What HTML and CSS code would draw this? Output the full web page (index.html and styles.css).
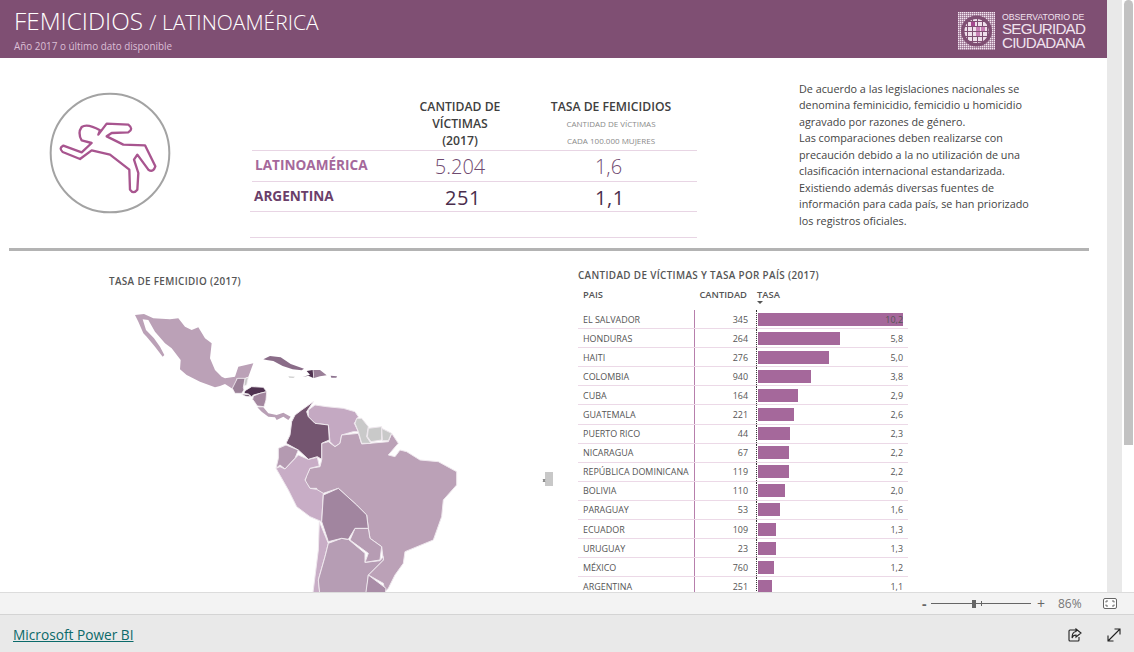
FILE: index.html
```html
<!DOCTYPE html>
<html lang="es">
<head>
<meta charset="utf-8">
<title>Femicidios / Latinoamérica</title>
<link rel="stylesheet" href="styles.css">
</head>
<body>
<div class="viewer">
  <main class="report">
    <header class="banner">
      <div class="titles">
        <h1 class="title">FEMICIDIOS <span class="title-sub">/ LATINOAMÉRICA</span></h1>
        <p class="subtitle">Año 2017 o último dato disponible</p>
      </div>
      <div class="logo">
        <svg class="logo-mark" width="37" height="38" viewBox="0 0 37 38">
          <defs>
            <pattern id="dots" width="2" height="2" patternUnits="userSpaceOnUse"><rect width="1.5" height="1.5" fill="#f3e6f1"/></pattern>
            <pattern id="cells" width="5" height="5" patternUnits="userSpaceOnUse"><rect width="4" height="4" fill="#efe0ec"/></pattern>
          </defs>
          <rect width="37" height="38" fill="url(#dots)"/>
          <circle cx="18.5" cy="19" r="15.500" fill="#7f4f73"/>
          <circle cx="18.5" cy="19" r="12" fill="url(#cells)"/>
          <rect x="13" y="10" width="4" height="4" fill="#a5498f"/>
          <rect x="18" y="15" width="4" height="4" fill="#c77fb4"/>
          <rect x="23" y="15" width="4" height="4" fill="#c77fb4"/>
          <rect x="18" y="20" width="4" height="4" fill="#c77fb4"/>
        </svg>
        <div class="logo-text">
          <span class="logo-small">OBSERVATORIO DE</span>
          <span class="logo-big">SEGURIDAD</span>
          <span class="logo-big">CIUDADANA</span>
        </div>
      </div>
    </header>

    <section class="summary">
      <div class="emblem">
        <svg width="122" height="122" viewBox="147 277 366 366">
          <circle cx="330" cy="460" r="178" fill="none" stroke="#a3a3a3" stroke-width="6"/>
          <path d="M190 438 L245 458 L275 430 L245 422 Q232 400 245 382 Q262 370 300 392 L295 405 L320 372 L385 375 Q402 388 385 398 L335 400 L320 410 L370 435 L435 437 L466 500 Q460 520 445 510 L412 465 L402 480 L415 520 L412 570 Q400 585 390 570 L388 510 L330 465 L275 452 L240 478 L188 457 Q175 445 190 438 Z" fill="none" stroke="#a8558f" stroke-width="7" stroke-linejoin="round"/>
        </svg>
      </div>
      <div class="kpi">
        <div class="kpi-head">
          <div></div>
          <div class="kpi-col">CANTIDAD DE<br>VÍCTIMAS<br>(2017)</div>
          <div class="kpi-col">TASA DE FEMICIDIOS
            <small class="kpi-note">CANTIDAD DE VÍCTIMAS</small>
            <small class="kpi-note">CADA 100.000 MUJERES</small>
          </div>
        </div>
        <div class="kpi-row kpi-region">
          <div class="kpi-label">LATINOAMÉRICA</div>
          <div class="kpi-value">5.204</div>
          <div class="kpi-value">1,6</div>
        </div>
        <div class="kpi-row kpi-country">
          <div class="kpi-label">ARGENTINA</div>
          <div class="kpi-value">251</div>
          <div class="kpi-value">1,1</div>
        </div>
        <div class="kpi-row kpi-empty"></div>
      </div>
      <p class="note">De acuerdo a las legislaciones nacionales se denomina feminicidio, femicidio u homicidio agravado por razones de género.<br>Las comparaciones deben realizarse con precaución debido a la no utilización de una clasificación internacional estandarizada. Existiendo además diversas fuentes de información para cada país, se han priorizado los registros oficiales.</p>
    </section>

    <hr class="rule">

    <section class="lower">
      <div class="map-panel">
        <h2 class="panel-title map-title">TASA DE FEMICIDIO (2017)</h2>
        <svg class="map" width="460" height="292" viewBox="100 300 460 292">
          <g transform="translate(130 310) scale(0.33333)">
            <path fill="#bba1b7" d="M15 15 L42 12 L70 25 L120 28 L145 25 L165 50 L185 60 L205 52 L225 85 L245 100 L240 145 L255 180 L275 200 L285 205 L315 200 L325 170 L370 160 L355 200 L345 205 L320 205 L315 235 L305 235 L285 222 L270 228 L255 232 L210 215 L170 195 L150 178 L152 150 L125 115 L105 100 L75 65 L55 30 L38 28 L48 60 L72 85 L90 110 L103 135 L98 140 L75 110 L50 80 L40 70 L25 35 Z"/>
          </g>
          <g transform="translate(120 300) scale(0.33333)" stroke="#f4eff3" stroke-width="2.500" stroke-linejoin="round">
            <path fill="#c9c9c9" d="M375 235 L385 232 L380 255 L372 258 Z"/>
            <path fill="#9a8097" d="M352 235 L375 235 L370 262 L372 270 L365 280 L345 280 L337 265 Z"/>
            <path fill="#4f3250" d="M375 272 L395 260 L430 262 L440 275 L420 280 L400 285 L395 290 L385 282 L372 280 Z"/>
            <path fill="#4f3250" d="M365 282 L385 284 L392 290 L375 288 Z"/>
            <path fill="#a3879f" d="M400 288 L420 280 L440 275 L438 300 L432 320 L412 318 L398 298 Z"/>
            <path fill="#b9a0b6" stroke="none" d="M412 322 L430 322 L445 340 L470 345 L490 338 L512 350 L505 360 L490 350 L470 360 L465 352 L445 350 L425 335 Z"/>
            <path fill="#8a6c88" stroke="none" d="M430 178 L450 168 L482 172 L512 192 L552 206 L545 211 L518 208 L488 198 L460 183 L440 180 Z"/>
            <path fill="#4f3250" stroke="none" d="M560 213 L578 210 L580 234 L565 227 L548 231 L570 224 Z"/>
            <path fill="#9a7f98" stroke="none" d="M580 210 L600 210 L620 226 L600 229 L582 234 Z"/>
            <path fill="#8e7490" stroke="none" d="M632 227 L651 229 L649 233 L634 233 Z"/>
            <path fill="#d0d0d0" stroke="none" d="M505 229 L525 230 L520 234 L508 233 Z"/>
          </g>
          <g transform="translate(260 400) scale(0.33333)" stroke="#efe8ee" stroke-width="3" stroke-linejoin="round">
            <path fill="#c4a9c2" d="M145 30 L165 15 L200 20 L250 25 L285 35 L295 50 L283 70 L295 95 L280 95 L245 105 L240 130 L225 140 L210 125 L205 75 L165 70 L145 50 Z"/>
            <path fill="#bba1b7" d="M140 225 L150 205 L180 200 L185 180 L185 130 L205 125 L225 140 L240 130 L245 105 L295 100 L305 132 L385 125 L395 100 L415 130 L385 165 L405 170 L420 150 L440 155 L480 180 L535 185 L590 215 L590 255 L550 300 L545 350 L520 420 L435 455 L430 490 L405 525 L385 565 L375 575 L370 550 L325 525 L370 480 L365 440 L330 415 L325 385 L320 345 L290 315 L235 265 L190 280 L172 280 L170 265 L150 265 L135 245 Z"/>
            <path fill="#c9c9c9" d="M290 55 L305 55 L325 80 L320 110 L333 130 L305 130 L295 95 L285 70 Z"/>
            <path fill="#c9c9c9" d="M325 85 L365 80 L365 120 L333 125 L322 110 Z"/>
            <path fill="#c9c9c9" d="M365 85 L395 100 L385 122 L367 122 Z"/>
            <path fill="#b49ab1" d="M55 145 L78 135 L115 150 L105 175 L75 207 L60 195 L48 205 L55 175 Z"/>
            <path fill="#c8adc6" d="M48 205 L60 200 L75 207 L115 165 L145 178 L172 172 L178 198 L150 205 L135 240 L150 265 L170 268 L190 280 L185 365 L150 350 L110 320 L85 270 Z"/>
            <path fill="#745570" d="M160 5 L140 35 L145 50 L165 70 L205 75 L208 120 L185 130 L185 178 L172 170 L145 178 L115 150 L78 130 L90 105 L95 65 L105 45 L125 30 Z"/>
            <path fill="#c8adc6" d="M178 365 L205 430 L195 470 L175 540 L180 585 L158 585 L175 450 Z"/>
            <path fill="#b69db4" d="M205 430 L245 415 L265 418 L315 460 L315 487 L360 482 L370 470 L370 480 L325 525 L318 590 L180 590 L175 540 L195 470 Z"/>
            <path fill="#b69cb3" d="M285 385 L325 385 L330 415 L365 440 L360 480 L315 487 L325 460 L270 420 Z"/>
            <path fill="#a1859f" d="M190 285 L235 265 L290 315 L320 345 L325 385 L285 385 L265 418 L245 415 L205 425 L185 365 Z"/>
            <path fill="#a98da7" d="M325 525 L378 565 L375 590 L316 590 Z"/>
          </g>
          <rect x="545" y="472" width="8" height="14" fill="#c8c8c8"/>
          <path d="M543 479 L545 482 M545 479 L543 482" stroke="#555" stroke-width="0.8"/>
        </svg>
      </div>
      <div class="table-panel">
        <h2 class="panel-title">CANTIDAD DE VÍCTIMAS Y TASA POR PAÍS (2017)</h2>
        <div class="table-head">
          <span class="th-name">PAIS</span>
          <span class="th-qty">CANTIDAD</span>
          <span class="th-rate">TASA<i class="sort"></i></span>
        </div>
        <div class="row"><span class="name">EL SALVADOR</span><span class="qty">345</span><span class="rate"><i class="bar" style="width:145px"></i><b class="val">10,2</b></span></div>
        <div class="row"><span class="name">HONDURAS</span><span class="qty">264</span><span class="rate"><i class="bar" style="width:82px"></i><b class="val">5,8</b></span></div>
        <div class="row"><span class="name">HAITI</span><span class="qty">276</span><span class="rate"><i class="bar" style="width:71px"></i><b class="val">5,0</b></span></div>
        <div class="row"><span class="name">COLOMBIA</span><span class="qty">940</span><span class="rate"><i class="bar" style="width:53px"></i><b class="val">3,8</b></span></div>
        <div class="row"><span class="name">CUBA</span><span class="qty">164</span><span class="rate"><i class="bar" style="width:40px"></i><b class="val">2,9</b></span></div>
        <div class="row"><span class="name">GUATEMALA</span><span class="qty">221</span><span class="rate"><i class="bar" style="width:36px"></i><b class="val">2,6</b></span></div>
        <div class="row"><span class="name">PUERTO RICO</span><span class="qty">44</span><span class="rate"><i class="bar" style="width:32px"></i><b class="val">2,3</b></span></div>
        <div class="row"><span class="name">NICARAGUA</span><span class="qty">67</span><span class="rate"><i class="bar" style="width:31px"></i><b class="val">2,2</b></span></div>
        <div class="row"><span class="name">REPÚBLICA DOMINICANA</span><span class="qty">119</span><span class="rate"><i class="bar" style="width:31px"></i><b class="val">2,2</b></span></div>
        <div class="row"><span class="name">BOLIVIA</span><span class="qty">110</span><span class="rate"><i class="bar" style="width:27px"></i><b class="val">2,0</b></span></div>
        <div class="row"><span class="name">PARAGUAY</span><span class="qty">53</span><span class="rate"><i class="bar" style="width:22px"></i><b class="val">1,6</b></span></div>
        <div class="row"><span class="name">ECUADOR</span><span class="qty">109</span><span class="rate"><i class="bar" style="width:18px"></i><b class="val">1,3</b></span></div>
        <div class="row"><span class="name">URUGUAY</span><span class="qty">23</span><span class="rate"><i class="bar" style="width:18px"></i><b class="val">1,3</b></span></div>
        <div class="row"><span class="name">MÉXICO</span><span class="qty">760</span><span class="rate"><i class="bar" style="width:16px"></i><b class="val">1,2</b></span></div>
        <div class="row"><span class="name">ARGENTINA</span><span class="qty">251</span><span class="rate"><i class="bar" style="width:14px"></i><b class="val">1,1</b></span></div>
      </div>
    </section>
  </main>
  <div class="scrollbar"><div class="scroll-thumb"></div></div>
</div>

<div class="zoombar">
  <span class="zoom-btn">-</span>
  <div class="slider"><i class="slider-thumb"></i><i class="slider-tick"></i></div>
  <span class="zoom-btn zoom-plus">+</span>
  <span class="zoom-pct">86%</span>
  <svg class="fit" width="14" height="11" viewBox="0 0 14 11">
    <rect x="0.5" y="0.5" width="13" height="10" rx="1.5" fill="#fff" stroke="#666"/>
    <path d="M3 4.5V3H5M9 3H11V4.5M11 6.5V8H9M5 8H3V6.5" fill="none" stroke="#666"/>
  </svg>
</div>

<footer class="footer">
  <a class="pbi-link" href="#">Microsoft Power BI</a>
  <div class="footer-icons">
    <svg width="14" height="14" viewBox="0 0 14 14" fill="none" stroke="#222" stroke-width="1.1">
      <path d="M8 2H2Q1 2 1 3V12Q1 13 2 13H10Q11 13 11 12V9"/>
      <path d="M8 1L13 5 8 9V7Q5 7 4 10 4 4 8 3.500Z"/>
    </svg>
    <svg width="14" height="14" viewBox="0 0 14 14" fill="none" stroke="#222" stroke-width="1.1">
      <path d="M1 13L13 1M7.500 1H13V6.500M1 7.500V13H6.500"/>
    </svg>
  </div>
</footer>
</body>
</html>
```
FILE: styles.css
```css
* { box-sizing: border-box; }
html, body { margin: 0; height: 100%; }
body {
  display: flex;
  flex-direction: column;
  height: 652px;
  overflow: hidden;
  font-family: "Open Sans", "Noto Sans", sans-serif;
  background: #fff;
}
.viewer { display: flex; height: 592px; }
.report { width: 1107px; height: 592px; overflow: hidden; background: #fff; }
.scrollbar { width: 27px; display: flex; background: linear-gradient(90deg, #e9e9e9 0 15px, #fff 15px 17px, #fff 17px); padding: 0 1px 147px 17px; }
.scroll-thumb { width: 9px; background: #c2c2c2; border-radius: 5px 5px 0 0; height: 445px; }

.banner {
  height: 58px;
  background: #7f4f73;
  display: flex;
  justify-content: space-between;
  padding: 6px 22px 0 14px;
}
.title { margin: 0; font-weight: 300; font-size: 24.300px; line-height: 30px; color: #fff; white-space: nowrap; }
.title-sub { font-size: 21px; font-weight: 300; }
.subtitle { margin: 3px 0 0; font-size: 9.900px; line-height: 12px; color: #dcbfd6; }
.logo { display: flex; gap: 7px; padding-top: 6px; }
.logo-text { display: flex; flex-direction: column; font-family: "Liberation Sans", sans-serif; color: #f0e2ee; width: 83px; }
.logo-small { font-size: 8.700px; line-height: 10px; white-space: nowrap; }
.logo-big { font-size: 15.200px; line-height: 14px; letter-spacing: -0.8px; white-space: nowrap; }

.summary { display: flex; height: 190px; }
.emblem { width: 250px; padding: 34px 0 0 49px; }
.emblem svg { display: block; }
.kpi { width: 447px; padding-top: 40px; }
.kpi-head, .kpi-row { display: grid; grid-template-columns: 138px 140px 162px; }
.kpi-head { height: 53px; border-bottom: 1px solid #e8d5e4; margin-left: 2px; color: #444; }
.kpi-col { font-size: 12.200px; font-weight: 600; line-height: 17px; text-align: center; color: #404040; }
.kpi-note { display: block; font-size: 8px; font-weight: 400; line-height: 17px; color: #8a8a8a; }
.kpi-row { align-items: center; border-bottom: 1px solid #e8d5e4; }
.kpi-region { height: 31px; margin-left: 2px; }
.kpi-country { height: 30px; }
.kpi-empty { height: 26px; }
.kpi-label { font-weight: 700; font-size: 13.600px; padding: 0 0 5px 3px; white-space: nowrap; }
.kpi-value { text-align: center; font-size: 20px; font-weight: 300; line-height: 30px; padding-top: 1px; }
.kpi-region .kpi-label { color: #a5689b; }
.kpi-region .kpi-value { color: #6f4a70; }
.kpi-region .kpi-value:last-child { padding-right: 5px; }
.kpi-country .kpi-label { color: #6b3f6a; padding-left: 4px; }
.kpi-country .kpi-value { color: #4a2d4c; font-weight: 400; letter-spacing: 0.6px; padding-left: 10px; }
.kpi-country .kpi-value:last-child { padding-left: 2px; }
.note { margin: 23px 0 0 102px; width: 236px; font-size: 10.800px; line-height: 16.450px; color: #444; }

.rule { margin: 0 0 0 9px; width: 1080px; height: 3px; border: 0; background: #b3b3b3; }

.lower { display: flex; height: 341px; }
.map-panel { width: 569px; position: relative; }
.panel-title { margin: 0; font-size: 9.900px; font-weight: 600; letter-spacing: 0.35px; line-height: 14px; color: #555; white-space: nowrap; }
.map-title { padding: 23px 0 0 109px; }
.map { position: absolute; left: 100px; top: 49px; display: block; }
.table-panel { width: 330px; margin-left: 9px; padding-top: 17px; }

.table-head { display: grid; grid-template-columns: 117px 53px 159px; height: 28px; padding-top: 6px; font-size: 9.400px; font-weight: 600; line-height: 14px; color: #555; }
.th-name { padding-left: 5px; }
.th-qty { text-align: right; margin: 0 1px 0 -20px; }
.th-rate { padding-left: 9px; position: relative; }
.sort { position: absolute; left: 9px; top: 13px; border: 3px solid transparent; border-top: 3px solid #555; border-bottom: 0; }
.row {
  display: grid;
  grid-template-columns: 117px 53px 159px;
  height: 19.100px;
  border-bottom: 1px solid #ecd9e7;
  align-items: center;
  font-size: 8.950px;
  color: #555;
  background: linear-gradient(#b77fac, #b77fac) 116px 0 / 1px 20px no-repeat;
}
.name { padding-left: 5px; white-space: nowrap; }
.qty { text-align: right; }
.rate { position: relative; margin-left: 8px; height: 100%; display: flex; align-items: center; border-left: 1px dotted #333; padding-left: 1px; }
.bar { display: block; height: 13px; background: #a5689b; }
.val { position: absolute; right: 4px; font-weight: 400; color: #555; }

.zoombar {
  height: 23px;
  background: #f3f3f3;
  border-top: 1px solid #dcdcdc;
  border-bottom: 1px solid #d4d4d4;
  display: flex;
  align-items: center;
  padding-left: 922px;
  color: #666;
  font-size: 12px;
}
.zoom-btn { width: 9px; font-size: 14px; line-height: 14px; font-weight: 700; }
.zoom-plus { margin-left: 6px; width: 10px; font-weight: 400; }
.slider { width: 100px; height: 1px; background: #666; position: relative; }
.slider-thumb { position: absolute; left: 41px; top: -3px; width: 4px; height: 8px; background: #666; }
.slider-tick { position: absolute; left: 50px; top: -2px; width: 1px; height: 5px; background: #666; }
.zoom-pct { margin-left: 7px; width: 40px; padding-left: 4px; color: #777; }
.fit { display: block; margin-left: 9px; }

.footer { height: 37px; background: #e9e9e9; display: flex; align-items: center; justify-content: space-between; padding: 2px 13px 0; }
.pbi-link { font-size: 13.700px; color: #0b6a6a; text-decoration: underline; }
.footer-icons { display: flex; gap: 25px; }
.footer-icons svg { display: block; }
```
